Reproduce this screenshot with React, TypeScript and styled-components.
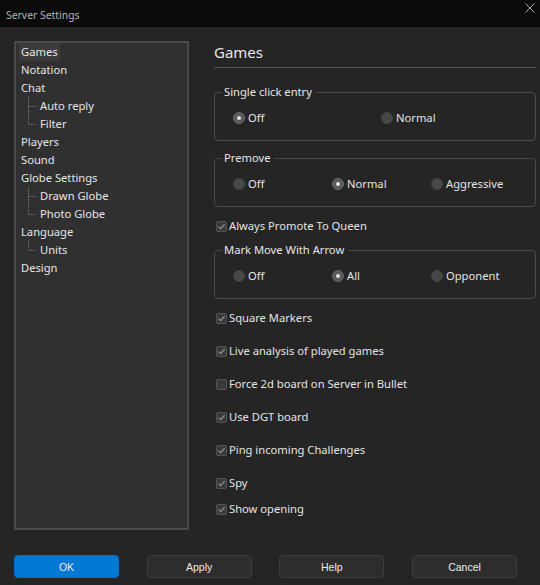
import React from "react";
import styled, { createGlobalStyle } from "styled-components";

const Global = createGlobalStyle`
  html, body { margin: 0; padding: 0; background: #252525; }
  body { font-family: "Segoe UI", "Noto Sans", "Open Sans", sans-serif; }
  * { box-sizing: border-box; }
`;

const Window = styled.div`
  width: 540px;
  height: 585px;
  background: #252525;
  display: flex;
  flex-direction: column;
  color: #e4e4e4;
  font-size: 11.2px;
  overflow: hidden;
`;

const TitleBar = styled.div`
  height: 27px;
  background: #0b0b0b;
  display: flex;
  justify-content: space-between;
  align-items: flex-start;
  padding: 0 5px 0 6px;
`;

const Title = styled.span`
  color: #b4b4b4;
  font-size: 10.4px;
  line-height: 16px;
  margin-top: 7px;
`;

const CloseIcon = styled.svg`
  margin-top: 3px;
  width: 10px;
  height: 10px;
`;

const Main = styled.div`
  display: flex;
  padding: 14px 0 0 14px;
  height: 503px;
`;

const Tree = styled.ul`
  list-style: none;
  margin: 0;
  padding: 0 0 0 3px;
  width: 175px;
  height: 489px;
  background: #303030;
  border: 2px solid #4a4a4a;
  flex-shrink: 0;
`;

const TreeRow = styled.li<{ $child?: boolean }>`
  height: 18px;
  display: flex;
  align-items: center;
  padding-left: ${(p) => (p.$child ? "9px" : "0")};
`;

const TreeLabel = styled.span<{ $selected?: boolean }>`
  line-height: 18px;
  padding: 0 2px;
  background: ${(p) => (p.$selected ? "#3c3c3c" : "transparent")};
  color: #e6e6e6;
`;

const Connector = styled.svg`
  width: 10px;
  height: 18px;
  flex-shrink: 0;
`;

const Panel = styled.div`
  margin-left: 25px;
  width: 322px;
  display: flex;
  flex-direction: column;
`;

const Heading = styled.div`
  font-size: 15px;
  line-height: 22px;
  padding-bottom: 4px;
  border-bottom: 1px solid #555555;
  color: #e8e8e8;
`;

const Group = styled.fieldset<{ $mt: number }>`
  margin: ${(p) => p.$mt}px 0 0 0;
  padding: 10px 0 14px 0;
  border: 1px solid #4a4a4a;
  border-radius: 4px;
  min-width: 0;
`;

const Legend = styled.legend`
  margin-left: 7px;
  padding: 0 4px 0 2px;
  line-height: 16px;
  color: #e6e6e6;
`;

const RadioRow = styled.div<{ $cols: string }>`
  display: grid;
  grid-template-columns: ${(p) => p.$cols};
  height: 16px;
  padding-left: 18px;
  align-items: center;
`;

const RadioItem = styled.label`
  display: flex;
  align-items: center;
  gap: 3px;
  line-height: 16px;
`;

const RadioDot = styled.span<{ $on?: boolean }>`
  width: 12px;
  height: 12px;
  border-radius: 50%;
  background: ${(p) => (p.$on ? "#5a5a5a" : "#484848")};
  border: 1px solid ${(p) => (p.$on ? "#666" : "#444")};
  display: flex;
  align-items: center;
  justify-content: center;
  flex-shrink: 0;
  &::after {
    content: "";
    width: 4px;
    height: 4px;
    border-radius: 50%;
    background: ${(p) => (p.$on ? "#e2e2e2" : "transparent")};
  }
`;

const CheckRow = styled.label<{ $mt: number }>`
  display: flex;
  align-items: center;
  gap: 2px;
  height: 16px;
  margin-top: ${(p) => p.$mt}px;
  padding-left: 2px;
  line-height: 16px;
`;

const CheckBox = styled.span`
  width: 11px;
  height: 11px;
  border-radius: 2px;
  background: #3a3a3a;
  border: 1px solid #555;
  display: flex;
  align-items: center;
  justify-content: center;
  flex-shrink: 0;
`;

const Footer = styled.div`
  display: flex;
  justify-content: space-between;
  padding: 0 23px 0 14px;
  margin-top: 25px;
`;

const Button = styled.button<{ $primary?: boolean }>`
  width: 105px;
  height: 23px;
  border-radius: 4px;
  border: 1px solid ${(p) => (p.$primary ? "#0a6ec2" : "#3e3e3e")};
  background: ${(p) => (p.$primary ? "#0078d4" : "#2d2d2d")};
  color: #ececec;
  font-family: "Liberation Sans", Arial, sans-serif;
  font-size: 10.5px;
  padding: 0;
`;

function Radio({ label, on }: { label: string; on?: boolean }) {
  return (
    <RadioItem>
      <RadioDot $on={on} />
      {label}
    </RadioItem>
  );
}

function Check({ label, on, mt }: { label: string; on?: boolean; mt: number }) {
  return (
    <CheckRow $mt={mt}>
      <CheckBox>
        {on && (
          <svg width="9" height="9" viewBox="0 0 9 9">
            <path d="M1.5 4.6 L3.6 6.6 L7.6 2.2" fill="none" stroke="#8e8e8e" strokeWidth="1.3" />
          </svg>
        )}
      </CheckBox>
      {label}
    </CheckRow>
  );
}

type Node = { label: string; child?: boolean; last?: boolean; selected?: boolean };

const nodes: Node[] = [
  { label: "Games", selected: true },
  { label: "Notation" },
  { label: "Chat" },
  { label: "Auto reply", child: true },
  { label: "Filter", child: true, last: true },
  { label: "Players" },
  { label: "Sound" },
  { label: "Globe Settings" },
  { label: "Drawn Globe", child: true },
  { label: "Photo Globe", child: true, last: true },
  { label: "Language" },
  { label: "Units", child: true, last: true },
  { label: "Design" },
];

export default function App() {
  return (
    <>
      <Global />
      <Window>
        <TitleBar>
          <Title>Server Settings</Title>
          <CloseIcon viewBox="0 0 10 10">
            <path d="M0.5 0.5 L9.5 9.5 M9.5 0.5 L0.5 9.5" stroke="#b0b0b0" strokeWidth="1" />
          </CloseIcon>
        </TitleBar>
        <Main>
          <Tree>
            {nodes.map((n) => (
              <TreeRow key={n.label} $child={n.child}>
                {n.child && (
                  <Connector viewBox="0 0 10 18">
                    <path
                      d={n.last ? "M0.5 0 L0.5 9.5 L9 9.5" : "M0.5 0 L0.5 18 M0.5 9.5 L9 9.5"}
                      fill="none"
                      stroke="#7a7a7a"
                      strokeWidth="1"
                      strokeDasharray="1 1"
                    />
                  </Connector>
                )}
                <TreeLabel $selected={n.selected}>{n.label}</TreeLabel>
              </TreeRow>
            ))}
          </Tree>
          <Panel>
            <Heading>Games</Heading>
            <Group $mt={16}>
              <Legend>Single click entry</Legend>
              <RadioRow $cols="148px 1fr">
                <Radio label="Off" on />
                <Radio label="Normal" />
              </RadioRow>
            </Group>
            <Group $mt={9}>
              <Legend>Premove</Legend>
              <RadioRow $cols="99px 99px 1fr">
                <Radio label="Off" />
                <Radio label="Normal" on />
                <Radio label="Aggressive" />
              </RadioRow>
            </Group>
            <Check label="Always Promote To Queen" on mt={11} />
            <Group $mt={8}>
              <Legend>Mark Move With Arrow</Legend>
              <RadioRow $cols="99px 99px 1fr">
                <Radio label="Off" />
                <Radio label="All" on />
                <Radio label="Opponent" />
              </RadioRow>
            </Group>
            <Check label="Square Markers" on mt={11} />
            <Check label="Live analysis of played games" on mt={17} />
            <Check label="Force 2d board on Server in Bullet" mt={17} />
            <Check label="Use DGT board" on mt={17} />
            <Check label="Ping incoming Challenges" on mt={17} />
            <Check label="Spy" on mt={17} />
            <Check label="Show opening" on mt={10} />
          </Panel>
        </Main>
        <Footer>
          <Button $primary>OK</Button>
          <Button>Apply</Button>
          <Button>Help</Button>
          <Button>Cancel</Button>
        </Footer>
      </Window>
    </>
  );
}
